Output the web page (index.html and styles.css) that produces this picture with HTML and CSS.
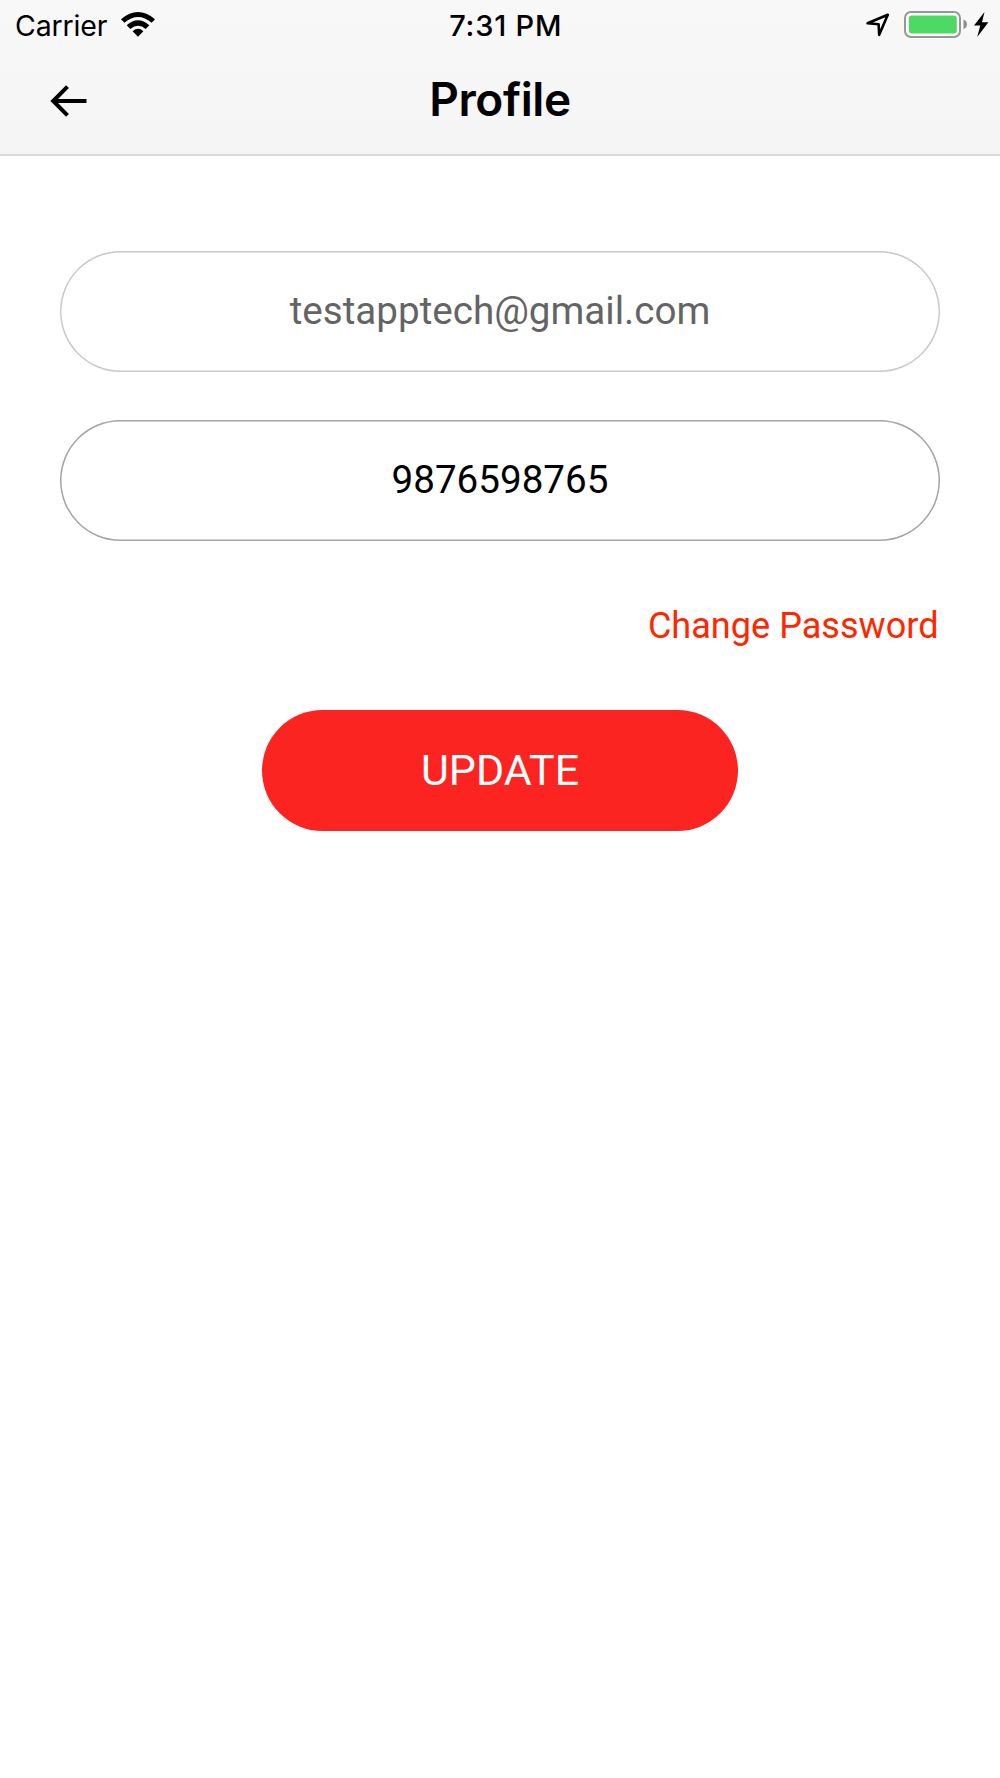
FILE: index.html
```html
<!DOCTYPE html>
<html lang="en">
<head>
  <meta charset="UTF-8">
  <meta name="viewport" content="width=device-width, initial-scale=1.0">
  <title>Profile</title>
  <link rel="stylesheet" href="styles.css">
</head>
<body>
  <header class="header">
    <div class="status-bar">
      <div class="status-left">
        <span class="carrier">Carrier</span>
        <svg class="wifi" width="34" height="25" viewBox="0 0 34 25">
          <path d="M0 7.2 Q17 -7.2 34 7.2 L30.6 10.8 Q17 -0.6 3.4 10.8 Z"/>
          <path d="M5.7 13.3 Q17 3.3 28.3 13.3 L24.7 17 Q17 10.3 9.3 17 Z"/>
          <path d="M11.6 19.2 Q17 14.4 22.4 19.2 L17 24.7 Z"/>
        </svg>
      </div>
      <span class="time">7:31 PM</span>
      <div class="status-right">
        <svg class="location" width="24" height="24" viewBox="0 0 24 24">
          <path d="M1.6 10.3 L21.8 1.8 L13.2 21.8 L12.6 11.2 Z"/>
        </svg>
        <svg class="battery" width="63" height="28" viewBox="0 0 63 28">
          <rect class="battery-shell" x="1" y="1" width="55" height="25" rx="6"/>
          <rect class="battery-level" x="4.8" y="4.5" width="48" height="18" rx="3"/>
          <path class="battery-cap" d="M59.5 8.5 Q63 10 63 13.3 Q63 16.7 59.5 18.2 Z"/>
        </svg>
        <svg class="bolt" width="15" height="25" viewBox="0 0 15 25">
          <path d="M10.5 0 L0 13.5 H6.3 L3.2 25 L14.4 10.3 H8 Z"/>
        </svg>
      </div>
    </div>
    <div class="nav-bar">
      <a class="back-btn" href="#" aria-label="Back">
        <svg width="38" height="32" viewBox="0 0 38 32">
          <path d="M36.5 16 H4 M17.5 1.7 L3.2 16 L17.5 30.3"/>
        </svg>
      </a>
      <h1 class="title">Profile</h1>
    </div>
  </header>
  <main class="profile">
    <div class="field field-disabled">testapptech@gmail.com</div>
    <div class="field">9876598765</div>
    <a class="change-password" href="#">Change Password</a>
    <button class="update-btn" type="button">UPDATE</button>
  </main>
</body>
</html>
```

FILE: styles.css
```css
* {
  margin: 0;
  padding: 0;
  box-sizing: border-box;
}

body {
  font-family: Roboto, sans-serif;
  background-color: #fff;
  color: #000;
  min-height: 1778px;
}

.header {
  height: 156px;
  background: linear-gradient(#f8f8f8, #f5f5f5);
  border-bottom: 2px solid #dadada;
  font-family: Inter, sans-serif;
}

/* Status bar */
.status-bar {
  display: grid;
  grid-template-columns: 1fr auto 1fr;
  height: 52px;
  padding: 0 11.5px 0 15px;
}

.status-left,
.status-right {
  display: flex;
  align-items: flex-start;
}

.status-right {
  justify-content: flex-end;
  padding-top: 11px;
}

.carrier {
  width: 106px;
  font-size: 28.5px;
  letter-spacing: -0.15px;
  line-height: 51px;
  white-space: nowrap;
}

.wifi {
  margin-top: 12px;
}

.time {
  padding-left: 8px;
  font-size: 29px;
  font-weight: 500;
  letter-spacing: 0.8px;
  line-height: 51px;
}

.location {
  margin: 2px 14px 0 0;
  fill: none;
  stroke: #000;
  stroke-width: 2.6;
  stroke-linejoin: round;
}

.battery-shell {
  fill: #fff;
  stroke: #979797;
  stroke-width: 2;
}

.battery-level {
  fill: #4cd964;
}

.battery-cap {
  fill: #8e8e8e;
}

.bolt {
  margin: 1px 0 0 7px;
}

/* Navigation bar */
.nav-bar {
  display: grid;
  grid-template-columns: 1fr auto 1fr;
  align-items: center;
  height: 96px;
}

.back-btn {
  display: flex;
  padding: 2px 0 0 50px;
}

.back-btn path {
  fill: none;
  stroke: #000;
  stroke-width: 4;
}

.title {
  margin-top: -2px;
  font-size: 46px;
  font-weight: 600;
  letter-spacing: -0.4px;
  line-height: 94px;
}

/* Profile form */
.profile {
  display: flex;
  flex-direction: column;
  padding: 95px 60px 0;
}

.field {
  height: 121px;
  margin-bottom: 48px;
  border-radius: 61px;
  box-shadow: inset 0 0 0 1.5px #a4a4a4;
  font-size: 38.6px;
  line-height: 120px;
  text-align: center;
}

.field-disabled {
  box-shadow: inset 0 0 0 1.5px #cacaca;
  color: #646464;
}

.change-password {
  align-self: flex-end;
  margin: 15px 1.5px 0 0;
  font-size: 36.1px;
  line-height: 44px;
  color: #ff2600;
  text-decoration: none;
}

.update-btn {
  align-self: center;
  width: 476px;
  height: 121px;
  margin-top: 62px;
  border: none;
  border-radius: 61px;
  background-color: #fc2421;
  color: #fff;
  font-family: inherit;
  font-size: 43px;
  line-height: 121px;
}
```
